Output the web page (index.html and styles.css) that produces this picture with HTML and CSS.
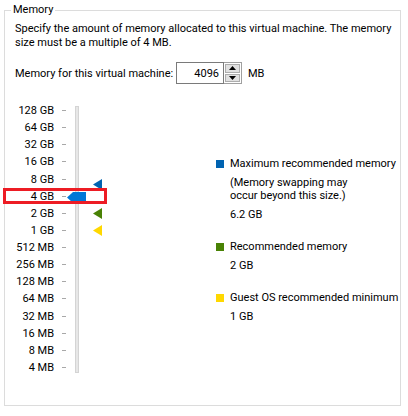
FILE: index.html
```html
<!DOCTYPE html>
<html>
<head>
<meta charset="utf-8">
<link rel="stylesheet" href="styles.css">
</head>
<body>
<fieldset class="group">
  <legend class="group-title">Memory</legend>
  <p class="desc">Specify the amount of memory allocated to this virtual machine. The memory<br>size must be a multiple of 4 MB.</p>
  <div class="mem-row">
    <span class="mem-label">Memory for this virtual machine:</span>
    <div class="spin">
      <input class="spin-input" type="text" value="4096">
      <div class="spin-btns">
        <span class="spin-btn"><svg width="7" height="4" viewBox="0 0 7 4"><polygon points="0,4 3.5,0 7,4" fill="#000"/></svg></span>
        <span class="spin-btn"><svg width="7" height="4" viewBox="0 0 7 4"><polygon points="0,0 7,0 3.5,4" fill="#000"/></svg></span>
      </div>
    </div>
    <span class="unit">MB</span>
  </div>
  <div class="slider-area">
    <ul class="scale">
      <li class="scale-row"><span class="scale-label">128 GB</span><span class="tick"></span></li>
      <li class="scale-row"><span class="scale-label">64 GB</span><span class="tick"></span></li>
      <li class="scale-row"><span class="scale-label">32 GB</span><span class="tick"></span></li>
      <li class="scale-row"><span class="scale-label">16 GB</span><span class="tick"></span></li>
      <li class="scale-row"><span class="scale-label">8 GB</span><span class="tick"></span></li>
      <li class="scale-row"><span class="scale-label">4 GB</span><span class="tick"></span></li>
      <li class="scale-row"><span class="scale-label">2 GB</span><span class="tick"></span></li>
      <li class="scale-row"><span class="scale-label">1 GB</span><span class="tick"></span></li>
      <li class="scale-row"><span class="scale-label">512 MB</span><span class="tick"></span></li>
      <li class="scale-row"><span class="scale-label">256 MB</span><span class="tick"></span></li>
      <li class="scale-row"><span class="scale-label">128 MB</span><span class="tick"></span></li>
      <li class="scale-row"><span class="scale-label">64 MB</span><span class="tick"></span></li>
      <li class="scale-row"><span class="scale-label">32 MB</span><span class="tick"></span></li>
      <li class="scale-row"><span class="scale-label">16 MB</span><span class="tick"></span></li>
      <li class="scale-row"><span class="scale-label">8 MB</span><span class="tick"></span></li>
      <li class="scale-row"><span class="scale-label">4 MB</span><span class="tick"></span></li>
    </ul>
    <div class="track">
      <svg class="thumb" width="19" height="11" viewBox="0 0 19 11"><polygon points="0,5.5 6,0 19,0 19,11 6,11" fill="#0078d7"/></svg>
      <svg class="marker marker-max" width="9" height="11" viewBox="0 0 9 11"><polygon points="0,5.5 9,0 9,11" fill="#0063b1"/></svg>
      <svg class="marker marker-rec" width="9" height="11" viewBox="0 0 9 11"><polygon points="0,5.5 9,0 9,11" fill="#498205"/></svg>
      <svg class="marker marker-min" width="9" height="11" viewBox="0 0 9 11"><polygon points="0,5.5 9,0 9,11" fill="#ffd800"/></svg>
    </div>
    <div class="legend">
      <div class="legend-item">
        <div class="legend-title"><span class="swatch swatch-max"></span>Maximum recommended memory</div>
        <div class="legend-note">(Memory swapping may<br>occur beyond this size.)</div>
        <div class="legend-value">6.2 GB</div>
      </div>
      <div class="legend-item">
        <div class="legend-title"><span class="swatch swatch-rec"></span>Recommended memory</div>
        <div class="legend-value">2 GB</div>
      </div>
      <div class="legend-item">
        <div class="legend-title"><span class="swatch swatch-min"></span>Guest OS recommended minimum</div>
        <div class="legend-value">1 GB</div>
      </div>
    </div>
  </div>
</fieldset>
<div class="highlight"></div>
</body>
</html>
```

FILE: styles.css
```css
* { box-sizing: border-box; }
html, body { margin: 0; padding: 0; }
body {
  width: 408px;
  height: 416px;
  overflow: hidden;
  background: #fff;
  color: #000;
  font-family: Roboto, "Noto Sans", sans-serif;
  font-size: 11px;
  position: relative;
}
.group {
  margin: 3px 0 0 4px;
  width: 397px;
  height: 403px;
  border: 1px solid #dcdcdc;
  padding: 0;
  min-width: 0;
}
.group-title {
  margin-left: 6px;
  padding: 0 2px;
  line-height: 14px;
}
.desc {
  margin: 5px 0 0 10px;
  line-height: 14px;
  white-space: nowrap;
}
.mem-row {
  display: flex;
  align-items: center;
  margin: 12px 0 0 10px;
  height: 22px;
}
.mem-label { width: 161px; white-space: nowrap; }
.spin { display: flex; height: 22px; }
.spin-input {
  width: 48px;
  height: 22px;
  border: 1px solid #7a7a7a;
  padding: 0 4px 0 0;
  margin: 0;
  text-align: right;
  font: inherit;
  color: #000;
  outline: none;
}
.spin-btns {
  width: 18px;
  height: 22px;
  display: flex;
  flex-direction: column;
  border: 1px solid #a0a0a0;
  border-left: none;
  padding: 1px;
  gap: 1px;
}
.spin-btn {
  flex: 1;
  display: flex;
  align-items: center;
  justify-content: center;
  background: #e1e1e1;
  border: 1px solid #adadad;
}
.unit { margin-left: 6px; }
.slider-area {
  display: flex;
  align-items: flex-start;
  margin-top: 18px;
}
.scale {
  list-style: none;
  margin: 0;
  padding: 0;
}
.scale-row {
  display: flex;
  align-items: center;
  height: 17.13px;
}
.scale-label {
  width: 49px;
  text-align: right;
  white-space: nowrap;
}
.tick {
  width: 4px;
  height: 1px;
  margin-left: 8px;
  background: #a8a8a8;
}
.track {
  position: relative;
  width: 4px;
  height: 267px;
  margin: 4px 0 0 9px;
  background: #e7e7e7;
  border: 1px solid #d4d4d4;
}
.thumb { position: absolute; left: -9px; top: 85px; }
.marker { position: absolute; left: 17px; }
.marker-max { top: 72px; }
.marker-rec { top: 101px; }
.marker-min { top: 118px; }
.legend {
  margin-left: 137px;
  padding-top: 55px;
  line-height: 13px;
  white-space: nowrap;
}
.legend-item { margin-bottom: 19px; }
.legend-title { display: flex; align-items: center; gap: 6px; }
.swatch { width: 8px; height: 8px; display: block; }
.swatch-max { background: #0063b1; }
.swatch-rec { background: #498205; }
.swatch-min { background: #ffd800; }
.legend-note, .legend-value { padding-left: 14px; margin-top: 6px; }
.highlight {
  position: absolute;
  left: 3px;
  top: 188px;
  width: 104px;
  height: 16px;
  border: 3px solid #ed1c24;
}
```
